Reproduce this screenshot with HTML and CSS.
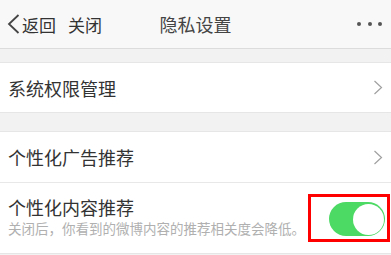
FILE: index.html
```html
<!DOCTYPE html>
<html>
<head>
    <meta charset="UTF-8">
    <title>隐私设置</title>
    <link rel="stylesheet" href="styles.css">
</head>
<body>
<div class="header">
    <div class="left">
        <a class="back" href="javascript:;">
            <svg width="13" height="20" viewBox="0 0 13 20"><polyline points="11.5,1 2,10 11.5,19" fill="none" stroke="#444" stroke-width="1.8"/></svg>
            <span>返回</span>
        </a>
        <a class="close" href="javascript:;">关闭</a>
    </div>
    <div class="title">隐私设置</div>
    <div class="right"><i></i><i></i><i></i></div>
</div>
<ul class="group first">
    <li class="row">
        <span class="name">系统权限管理</span>
        <svg class="arrow" width="10" height="15" viewBox="0 0 10 15"><polyline points="1.5,1 8.5,7.5 1.5,14" fill="none" stroke="#a0a0a0" stroke-width="1.2"/></svg>
    </li>
</ul>
<ul class="group">
    <li class="row">
        <span class="name">个性化广告推荐</span>
        <svg class="arrow" width="10" height="15" viewBox="0 0 10 15"><polyline points="1.5,1 8.5,7.5 1.5,14" fill="none" stroke="#a0a0a0" stroke-width="1.2"/></svg>
    </li>
    <li class="row tall">
        <div class="text">
            <p class="name">个性化内容推荐</p>
            <p class="desc">关闭后，你看到的微博内容的推荐相关度会降低。</p>
        </div>
        <span class="mark"><span class="switch on"><i></i></span></span>
    </li>
</ul>
</body>
</html>
```

FILE: styles.css
```css
*{margin:0;padding:0;}
body{background:#f2f2f2;font-family:"Noto Sans CJK SC","Noto Sans",sans-serif;color:#333;}
ul,li{list-style:none;}
a{text-decoration:none;color:#333;}
.header{display:grid;grid-template-columns:1fr auto 1fr;align-items:center;height:48px;background:#f8f8f8;border-bottom:1px solid #dcdcdc;}
.left{display:flex;align-items:center;padding-left:7px;}
.back{display:flex;align-items:center;font-size:17px;}
.back svg{margin-right:2px;}
.close{margin-left:12px;font-size:17px;}
.title{font-size:18px;color:#444;}
.right{display:flex;justify-content:flex-end;gap:6.5px;padding-right:9px;}
.right i{width:4px;height:4px;border-radius:50%;background:#555;}
.group{background:#fff;border-top:1px solid #e6e6e6;border-bottom:1px solid #e6e6e6;margin-top:18px;}
.group.first{margin-top:13px;}
.row{display:flex;align-items:center;justify-content:space-between;height:50px;padding:0 8px;}
.group.first .row{height:49px;}
.row + .row{border-top:1px solid #e8e8e8;}
.row.tall{height:70px;padding-right:1px;}
.name{font-size:18px;line-height:22px;}
.desc{font-size:13.5px;line-height:18px;color:#b0b0b0;margin-top:1px;white-space:nowrap;}
.text{margin-top:-3px;}
.mark{display:block;border:3px solid #f00;padding:5px 2px 3px 18px;}
.switch{display:block;position:relative;width:56px;height:34px;border-radius:17px;background:#4cd964;}
.switch i{position:absolute;top:1.5px;right:1.5px;width:31px;height:31px;border-radius:50%;background:#fff;}
```
